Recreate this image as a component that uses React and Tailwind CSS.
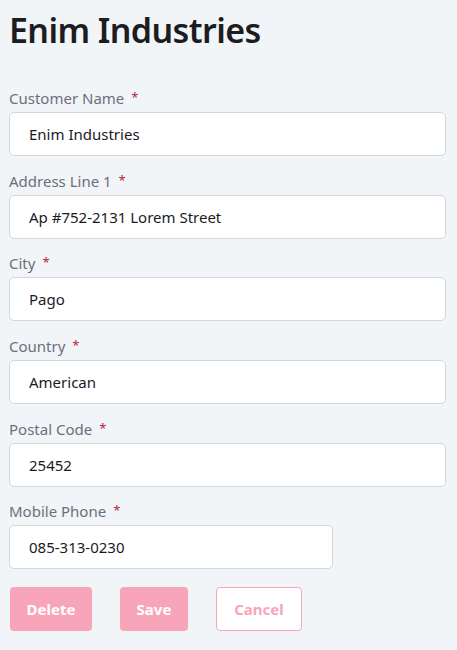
// App.jsx
const fields = [
  { label: "Customer Name", value: "Enim Industries" },
  { label: "Address Line 1", value: "Ap #752-2131 Lorem Street" },
  { label: "City", value: "Pago" },
  { label: "Country", value: "American" },
  { label: "Postal Code", value: "25452" },
  { label: "Mobile Phone", value: "085-313-0230", narrow: true },
];

const Field = ({ label, value, narrow }) => (
  <div className="flex flex-col">
    <label className="block h-5 leading-5 text-[15px] text-[#6c6f7a] pl-[9px] overflow-hidden">
      {label}
      <span className="ml-[7px] text-[#b5273a] text-[13px] leading-none align-top relative top-[3px]">*</span>
    </label>
    <input
      readOnly
      value={value}
      className={`mt-1 h-11 ml-[9px] rounded-[5px] border border-[#d3d7dd] bg-white pl-[19px] text-[15px] text-[#1b1b1f] outline-none ${
        narrow ? "w-[324px]" : "w-[437px]"
      }`}
    />
  </div>
);

export default function App() {
  return (
    <div
      className="min-h-screen w-[457px] bg-[#f2f5f8] overflow-hidden"
      style={{ fontFamily: '"Noto Sans", "Open Sans", sans-serif' }}
    >
      <h1 className="pt-[8px] pl-[9px] text-[34px] leading-[44px] font-semibold text-[#1c1d22] tracking-[-0.6px]">
        Enim Industries
      </h1>
      <div className="mt-[36px] flex flex-col gap-[14.7px]">
        {fields.map((f) => (
          <Field key={f.label} {...f} />
        ))}
      </div>
      <div className="mt-[18px] pl-[10px] flex gap-[28px]">
        <button className="h-11 w-[82px] rounded-[4px] bg-[#f9a5b9] text-white font-bold text-[15px]">
          Delete
        </button>
        <button className="h-11 w-[68px] rounded-[4px] bg-[#f9a5b9] text-white font-bold text-[15px]">
          Save
        </button>
        <button className="h-11 w-[86px] rounded-[4px] border border-[#f9a5b9] bg-white text-[#f9a5b9] font-bold text-[15px]">
          Cancel
        </button>
      </div>
    </div>
  );
}
